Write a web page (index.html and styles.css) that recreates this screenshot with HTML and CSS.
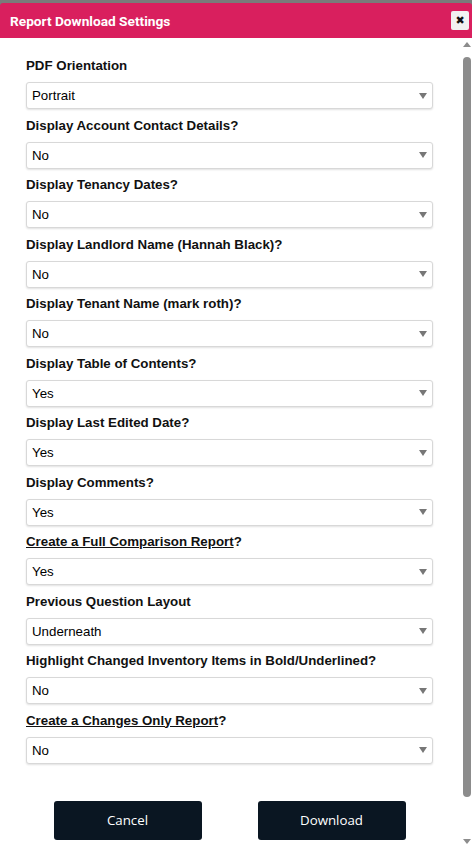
FILE: index.html
```html
<!DOCTYPE html>
<html lang="en">
<head>
    <meta charset="UTF-8">
    <meta name="viewport" content="width=device-width, initial-scale=1.0">
    <title>Report Download Settings</title>
    <link rel="stylesheet" href="styles.css">
</head>
<body>
    <div class="modal">
        <div class="modal-head">
            <h1>Report Download Settings</h1>
            <button class="close-btn" type="button">&#x2716;</button>
        </div>
        <div class="modal-main">
            <form class="settings" name="reportform">
                <div class="fields">
                    <div class="field">
                        <label>PDF Orientation</label>
                        <select class="dropdown"><option>Portrait</option><option>Landscape</option></select>
                    </div>
                    <div class="field">
                        <label>Display Account Contact Details?</label>
                        <select class="dropdown"><option>No</option><option>Yes</option></select>
                    </div>
                    <div class="field">
                        <label>Display Tenancy Dates?</label>
                        <select class="dropdown"><option>No</option><option>Yes</option></select>
                    </div>
                    <div class="field">
                        <label>Display Landlord Name (Hannah Black)?</label>
                        <select class="dropdown"><option>No</option><option>Yes</option></select>
                    </div>
                    <div class="field">
                        <label>Display Tenant Name (mark roth)?</label>
                        <select class="dropdown"><option>No</option><option>Yes</option></select>
                    </div>
                    <div class="field">
                        <label>Display Table of Contents?</label>
                        <select class="dropdown"><option>Yes</option><option>No</option></select>
                    </div>
                    <div class="field">
                        <label>Display Last Edited Date?</label>
                        <select class="dropdown"><option>Yes</option><option>No</option></select>
                    </div>
                    <div class="field">
                        <label>Display Comments?</label>
                        <select class="dropdown"><option>Yes</option><option>No</option></select>
                    </div>
                    <div class="field">
                        <label><u>Create a Full Comparison Report</u>?</label>
                        <select class="dropdown"><option>Yes</option><option>No</option></select>
                    </div>
                    <div class="field">
                        <label>Previous Question Layout</label>
                        <select class="dropdown"><option>Underneath</option><option>Side by Side</option></select>
                    </div>
                    <div class="field">
                        <label>Highlight Changed Inventory Items in Bold/Underlined?</label>
                        <select class="dropdown"><option>No</option><option>Yes</option></select>
                    </div>
                    <div class="field">
                        <label><u>Create a Changes Only Report</u>?</label>
                        <select class="dropdown"><option>No</option><option>Yes</option></select>
                    </div>
                </div>
                <div class="actions">
                    <button type="button" class="btn">Cancel</button>
                    <button type="button" class="btn">Download</button>
                </div>
            </form>
            <div class="scrollbar">
                <span class="arrow up"></span>
                <span class="thumb"></span>
                <span class="arrow down"></span>
            </div>
        </div>
    </div>
</body>
</html>
```

FILE: styles.css
```css
html{
    height: 100%;
}

body{
    margin: 0;
    height: 100%;
    background-color: #7a7a7a;
    font-family: Arial, 'Liberation Sans', sans-serif;
}

.modal{
    height: 100%;
    box-sizing: border-box;
    padding-top: 3px;
    display: flex;
    flex-direction: column;
}

.modal-head{
    height: 35px;
    background-color: #d91f5e;
    border-radius: 3px 3px 0 0;
    display: flex;
    align-items: center;
    justify-content: space-between;
    padding: 0 3px 0 10px;
}

.modal-head h1{
    margin: 0;
    color: white;
    font-family: Roboto, 'Liberation Sans', sans-serif;
    font-size: 13.7px;
    font-weight: bold;
}

.close-btn{
    width: 18px;
    height: 19px;
    padding: 0;
    border: none;
    border-radius: 2px;
    background-color: #f2f2f2;
    color: #111;
    font-size: 11px;
    line-height: 19px;
    font-family: 'DejaVu Sans', sans-serif;
    cursor: pointer;
}

.modal-main{
    flex: 1;
    background-color: white;
    display: flex;
}

.settings{
    flex: 1;
    padding: 20px 29px 0 26px;
}

.fields{
    display: flex;
    flex-direction: column;
    gap: 8.5px;
}

.field{
    display: flex;
    flex-direction: column;
    gap: 8px;
}

.field label{
    height: 16px;
    line-height: 16px;
    font-size: 13.3px;
    font-weight: bold;
    color: #111;
}

.dropdown{
    -webkit-appearance: none;
    appearance: none;
    height: 27px;
    width: 100%;
    margin: 0;
    padding: 0 20px 0 5px;
    border: 1px solid #d8d8d8;
    border-radius: 3px;
    box-shadow: 0 1px 2px rgba(0, 0, 0, 0.12);
    background-color: white;
    background-image: url("data:image/svg+xml;utf8,<svg xmlns='http://www.w3.org/2000/svg' width='8' height='6'><path d='M0 0h8L4 6z' fill='%23777'/></svg>");
    background-repeat: no-repeat;
    background-position: right 5px center;
    font-family: Arial, 'Liberation Sans', sans-serif;
    font-size: 13.3px;
    color: #000;
    outline: none;
}

.actions{
    display: flex;
    justify-content: center;
    gap: 56px;
    margin-top: 37px;
}

.btn{
    width: 148px;
    height: 39px;
    border: none;
    border-radius: 3px;
    background-color: #0a1622;
    color: white;
    font-family: 'Open Sans', 'Noto Sans', sans-serif;
    font-size: 13.3px;
    cursor: pointer;
}

/* thin scrollbar drawn at the right edge */
.scrollbar{
    width: 10px;
    display: flex;
    flex-direction: column;
    align-items: center;
    padding: 4px 0 4px;
    box-sizing: border-box;
}

.thumb{
    flex: 1;
    width: 8px;
    margin: 10px 0 42px;
    background-color: #8c8c8c;
    border-radius: 4px;
}

.arrow{
    width: 0;
    height: 0;
    border-left: 4px solid transparent;
    border-right: 4px solid transparent;
}

.arrow.up{
    border-bottom: 5px solid #8c8c8c;
}

.arrow.down{
    border-top: 5px solid #8c8c8c;
}
```
